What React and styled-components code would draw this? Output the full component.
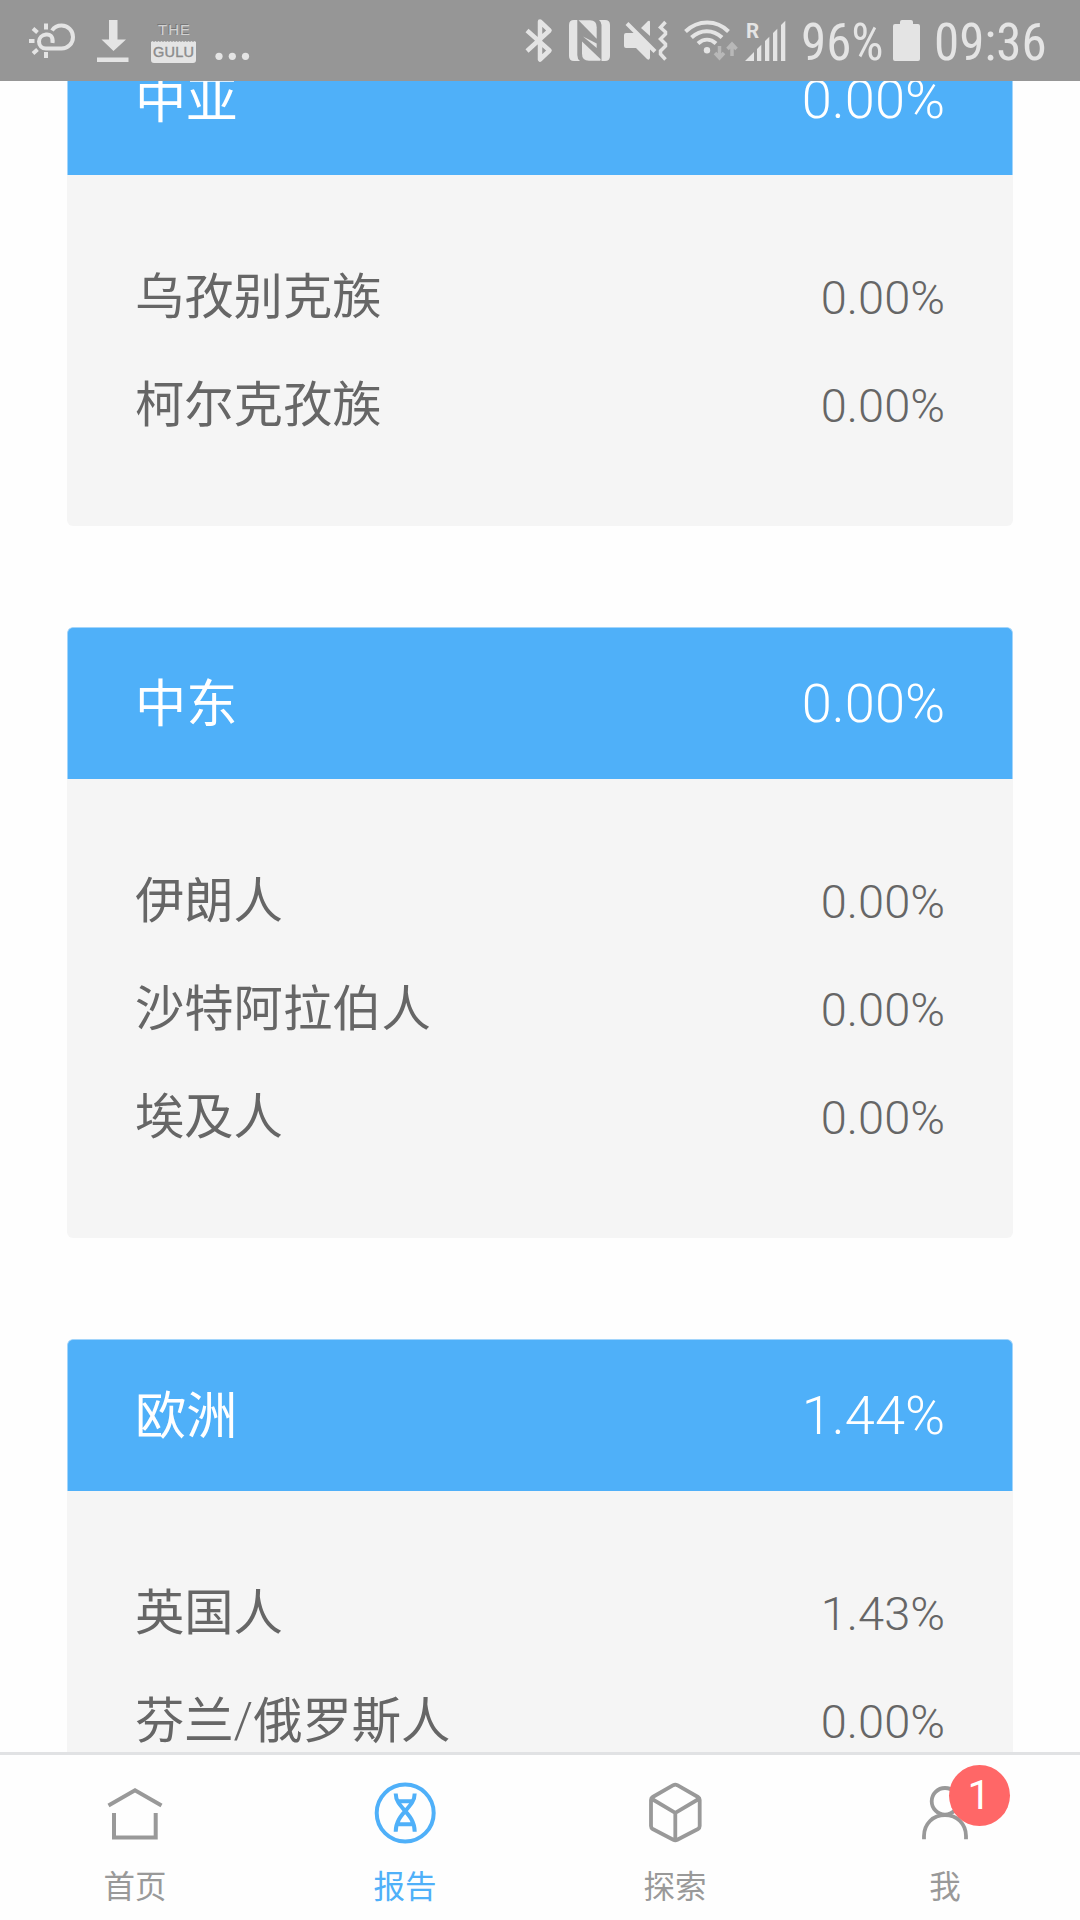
import React from 'react';
import styled, { createGlobalStyle } from 'styled-components';

const GlobalStyle = createGlobalStyle`
  * {
    box-sizing: border-box;
  }
  body {
    margin: 0;
    background: #fefefe;
    font-family: Roboto, 'Noto Sans CJK SC', sans-serif;
  }
`;

const PageDiv = styled.div`
  display: flex;
  flex-direction: column;
  width: 1080px;
  height: 1920px;
  overflow: hidden;
  background: #fefefe;
`;

const StatusBarHeader = styled.header`
  display: flex;
  flex: none;
  justify-content: space-between;
  height: 81px;
  background: #969696;
  color: #e4e4e4;
  svg {
    display: block;
    flex: none;
  }
`;

const StatusGroupDiv = styled.div`
  display: flex;
  height: 81px;
`;

const StatusTextSpan = styled.span`
  width: ${({ $width }) => $width}px;
  padding-top: 15px;
  padding-left: ${({ $left }) => $left}px;
  font-family: 'Roboto Condensed', Roboto, sans-serif;
  font-size: 51px;
  line-height: 56px;
  white-space: nowrap;
`;

const ShadowText = styled.text`
  text-shadow: -1px -1px 0 #777;
`;

const ReportMain = styled.main`
  display: flex;
  flex: 1;
  flex-direction: column;
  justify-content: flex-start;
  gap: 101px;
  min-height: 0;
  padding: 0 67px;
  overflow: hidden;
`;

const CardSection = styled.section`
  flex: none;
  overflow: hidden;
  border-radius: 6px;
  background: #f5f5f5;
  &:first-child {
    margin-top: -58px;
  }
`;

const CardTitleDiv = styled.div`
  display: flex;
  justify-content: space-between;
  align-items: center;
  height: 152px;
  padding: 0 67px;
  border: 1px solid #a3d5fb;
  border-bottom: 0;
  border-radius: 6px 6px 0 0;
  background: #4fb0f9;
  color: #fff;
  font-size: 51.2px;
  line-height: 76px;
`;

const CardListUl = styled.ul`
  margin: 0;
  padding: 67px 68px 68px;
  list-style: none;
`;

const CardItemLi = styled.li`
  display: flex;
  justify-content: space-between;
  align-items: center;
  height: 108px;
  color: #666;
  font-size: 49.3px;
  line-height: 74px;
`;

const NameSpan = styled.span`
  padding-top: ${({ $large }) => ($large ? 3 : 1)}px;
`;

const SlashSpan = styled.span`
  font-weight: 300;
`;

const PercentSpan = styled.span`
  padding-top: ${({ $large }) => ($large ? 0 : 3)}px;
  font-weight: 300;
  font-size: ${({ $large }) => ($large ? 54.2 : 47)}px;
`;

const TabBarNav = styled.nav`
  display: flex;
  flex: none;
  height: 168px;
  border-top: 3px solid #e1e2e4;
  background: #fefefe;
`;

const TabItemDiv = styled.div`
  display: flex;
  flex: 1;
  flex-direction: column;
  align-items: center;
  padding-top: 27px;
  color: ${({ $active }) => ($active ? '#4fb0f9' : '#999')};
  font-size: 31.5px;
  line-height: 48px;
`;

const TabIconDiv = styled.div`
  position: relative;
  height: 66px;
  margin-bottom: 16px;
  svg {
    display: block;
  }
`;

const BadgeSpan = styled.span`
  position: absolute;
  top: -17px;
  left: 36.5px;
  width: 61px;
  height: 61px;
  border-radius: 50%;
  background: #ff6767;
  color: #fff;
  font-size: 41px;
  line-height: 60px;
  text-align: center;
`;

const LeftStatusIcons = () => (
  <svg width='270' height='81' viewBox='0 0 270 81' fill='none' stroke='#e4e4e4'>
    <g strokeWidth='4'>
      <path d='M46 23.5v6M46 52v6M29 41h5.5M33 28.5l4.5 4M33 53.500l4.500-4' />
      <path d='M52.500 43c1-7-3-9-6.500-8.500-4 .5-7 3.500-7 7 0 4 3 7 7 7h15.500c6.500 0 11.500-5 11.500-11.500s-5-11.500-11.500-11.500c-4 0-7.500 2-9.500 5' />
    </g>
    <path fill='#e4e4e4' stroke='none' d='M109 20h8.500v19.500h8.500L113.500 51 101.500 39.500h7.500zM97 57.500h31.500V62H97z' />
    <path fill='#e4e4e4' stroke='none' d='M151 42l1.500-1 1.500 1 1.500-1 1.500 1 1.500-1 1.500 1 1.500-1 1.500 1 1.500-1 1.500 1 1.500-1 1.500 1 1.500-1 1.500 1 1.500-1 1.500 1 1.500-1 1.500 1 1.500-1 1.500 1 1.500-1 1.500 1 1.500-1 1.500 1 1.500-1 1.500 1 1.500-1 1.500 1 1.500-1 1.500 1V60q0 3-3 3H154q-3 0-3-3z' />
    <g fontFamily='Liberation Sans' textAnchor='middle' stroke='none'>
      <ShadowText x='174' y='35' fill='#d2d2d2' fontSize='15' textLength='32'>THE</ShadowText>
      <text x='173.500' y='57.200' fill='#8c8c8c' stroke='#8c8c8c' strokeWidth='.4' fontSize='14.500' textLength='41'>GULU</text>
    </g>
    <g fill='#e4e4e4' stroke='none'>
      <circle cx='219' cy='56.300' r='3.600' />
      <circle cx='232.300' cy='56.300' r='3.600' />
      <circle cx='245.500' cy='56.300' r='3.600' />
    </g>
  </svg>
);

const RightStatusIcons = () => (
  <svg width='280' height='81' viewBox='520 0 280 81' fill='none' stroke='#e4e4e4'>
    <path strokeWidth='4.500' strokeLinejoin='round' d='M527 30.500l22.500 20L540 59.500V21.500l9.500 9L527 51' />
    {/* nfc */}
    <g fill='#e4e4e4' stroke='none'>
      <path d='M574 20h3.300v35q0 4 2.700 6h-6q-5 0-5-5V25q0-5 5-5z' />
      <path d='M578.500 20.300H590q6.700 0 6.700 7V38.800z' />
      <path d='M583 36.500L596.700 48v-4.500z' />
      <path d='M582 41.500L600.700 59.300q0 1.500-1 1.500H589q-7 0-7-7z' />
      <path d='M599 20h6q5 0 5 5v31q0 5-5 5h-3.500V25q0-3-2.500-5z' />
    </g>
    {/* muted speaker with vibration */}
    <path fill='#e4e4e4' stroke='none' d='M624 35q0-2 2-2h9l15 15v10q-1 3-3 1l-11-11h-10q-2 0-2-2zM641 28l7-7q2-1 2 1v14z' />
    <path strokeWidth='4' d='M627 23.500l28 28' />
    <path strokeWidth='3.500' d='M665.500 22l-5 5.500 5 4.500v2l-5 5 5 5v2l-5 5v3l5 5.500' />
    <g strokeWidth='4'>
      <path d='M685.500 31.500c12.500-12 31-12 43 0' />
      <path d='M691.500 37.500c9-8.500 21.500-8.500 30.500 0' />
      <path d='M698 43.500c5.500-5 12.500-5 18 0' />
    </g>
    <circle cx='707' cy='50.300' r='3.200' fill='#e4e4e4' stroke='none' />
    <path stroke='#b8b8b8' strokeWidth='3.500' d='M719.500 46v12M715 53l4.500 5 4.500-5M732 56V44M727.500 49l4.500-5 4.500 5' />
    <text x='746' y='38' fill='#e4e4e4' stroke='none' fontFamily='Roboto' fontWeight='700' fontSize='20.500'>R</text>
    <path fill='#e4e4e4' stroke='none' d='M745 61l9-9v9zM757 49l4.300-4.300V61H757zM765 41l4.300-4.300V61H765zM773 33l4.300-4.300V61H773zM781 25l4.300-4.300V61H781z' />
  </svg>
);

const BatteryIcon = () => (
  <svg width='28' height='81' viewBox='0 0 28 81'>
    <path fill='#e4e4e4' d='M2 24h5v-2q0-2 2-2h9q2 0 2 2v2h5q2 0 2 2v33q0 2-2 2H2q-2 0-2-2V26q0-2 2-2z' />
  </svg>
);

const HomeIcon = () => (
  <svg width='66' height='66' viewBox='0 0 66 66' fill='none' stroke='currentColor' strokeWidth='4'>
    <path d='M6.500 23.500L33 8.300l26.500 15.200M12 31v24.500h41.700V31' />
  </svg>
);

const ReportIcon = () => (
  <svg width='66' height='66' viewBox='0 0 66 66' fill='none' stroke='currentColor' strokeWidth='4'>
    <circle cx='33.200' cy='31' r='28.500' />
    <path d='M23.700 11.500c0 15 19 19 19 38.200M42.700 11.500c0 15-19 19-19 38.200M26 19.200h14M26 42.200h14' />
  </svg>
);

const ExploreIcon = () => (
  <svg width='66' height='66' viewBox='0 0 66 66' fill='none' stroke='currentColor' strokeWidth='3.800' strokeLinejoin='round'>
    <path d='M33.300 2.700q1 0 2 .5L56 15q1.700 1 1.700 3v26q0 2-1.700 3L35.300 57.800q-2 1-4 0L10.700 47Q9 46 9 44V18q0-2 1.700-3L31.300 3.200q1-.5 2-.5zM10 17l23.300 13.800L56.700 17M33.300 31v27' />
  </svg>
);

const MeIcon = () => (
  <svg width='66' height='66' viewBox='0 0 66 66' fill='none' stroke='currentColor' strokeWidth='3.800'>
    <circle cx='33' cy='19.300' r='13.300' />
    <path d='M12 57.300V54c0-12 9-21 21-21s21 9 21 21v3.300' />
  </svg>
);

const cards = [
  {
    name: '中亚',
    percent: '0.00%',
    items: [
      { name: '乌孜别克族', percent: '0.00%' },
      { name: '柯尔克孜族', percent: '0.00%' },
    ],
  },
  {
    name: '中东',
    percent: '0.00%',
    items: [
      { name: '伊朗人', percent: '0.00%' },
      { name: '沙特阿拉伯人', percent: '0.00%' },
      { name: '埃及人', percent: '0.00%' },
    ],
  },
  {
    name: '欧洲',
    percent: '1.44%',
    items: [
      { name: '英国人', percent: '1.43%' },
      { name: '芬兰/俄罗斯人', percent: '0.00%' },
    ],
  },
];

const tabs = [
  { name: '首页', Icon: HomeIcon },
  { name: '报告', Icon: ReportIcon, active: true },
  { name: '探索', Icon: ExploreIcon },
  { name: '我', Icon: MeIcon, badge: 1 },
];

const ItemName = ({ name }) => (
  <NameSpan>
    {name.split('/').map((part, index) => (
      <React.Fragment key={part}>
        {index > 0 && <SlashSpan>/</SlashSpan>}
        {part}
      </React.Fragment>
    ))}
  </NameSpan>
);

const App = () => {
  return (
    <PageDiv>
      <GlobalStyle />
      <StatusBarHeader>
        <LeftStatusIcons />
        <StatusGroupDiv>
          <RightStatusIcons />
          <StatusTextSpan $width={93} $left={1}>96%</StatusTextSpan>
          <BatteryIcon />
          <StatusTextSpan $width={159} $left={13}>09:36</StatusTextSpan>
        </StatusGroupDiv>
      </StatusBarHeader>
      <ReportMain>
        {cards.map((card) => (
          <CardSection key={card.name}>
            <CardTitleDiv>
              <NameSpan $large>{card.name}</NameSpan>
              <PercentSpan $large>{card.percent}</PercentSpan>
            </CardTitleDiv>
            <CardListUl>
              {card.items.map((item) => (
                <CardItemLi key={item.name}>
                  <ItemName name={item.name} />
                  <PercentSpan>{item.percent}</PercentSpan>
                </CardItemLi>
              ))}
            </CardListUl>
          </CardSection>
        ))}
      </ReportMain>
      <TabBarNav>
        {tabs.map(({ name, Icon, active, badge }) => (
          <TabItemDiv key={name} $active={active}>
            <TabIconDiv>
              <Icon />
              {badge && <BadgeSpan>{badge}</BadgeSpan>}
            </TabIconDiv>
            <span>{name}</span>
          </TabItemDiv>
        ))}
      </TabBarNav>
    </PageDiv>
  );
};

export default App;
